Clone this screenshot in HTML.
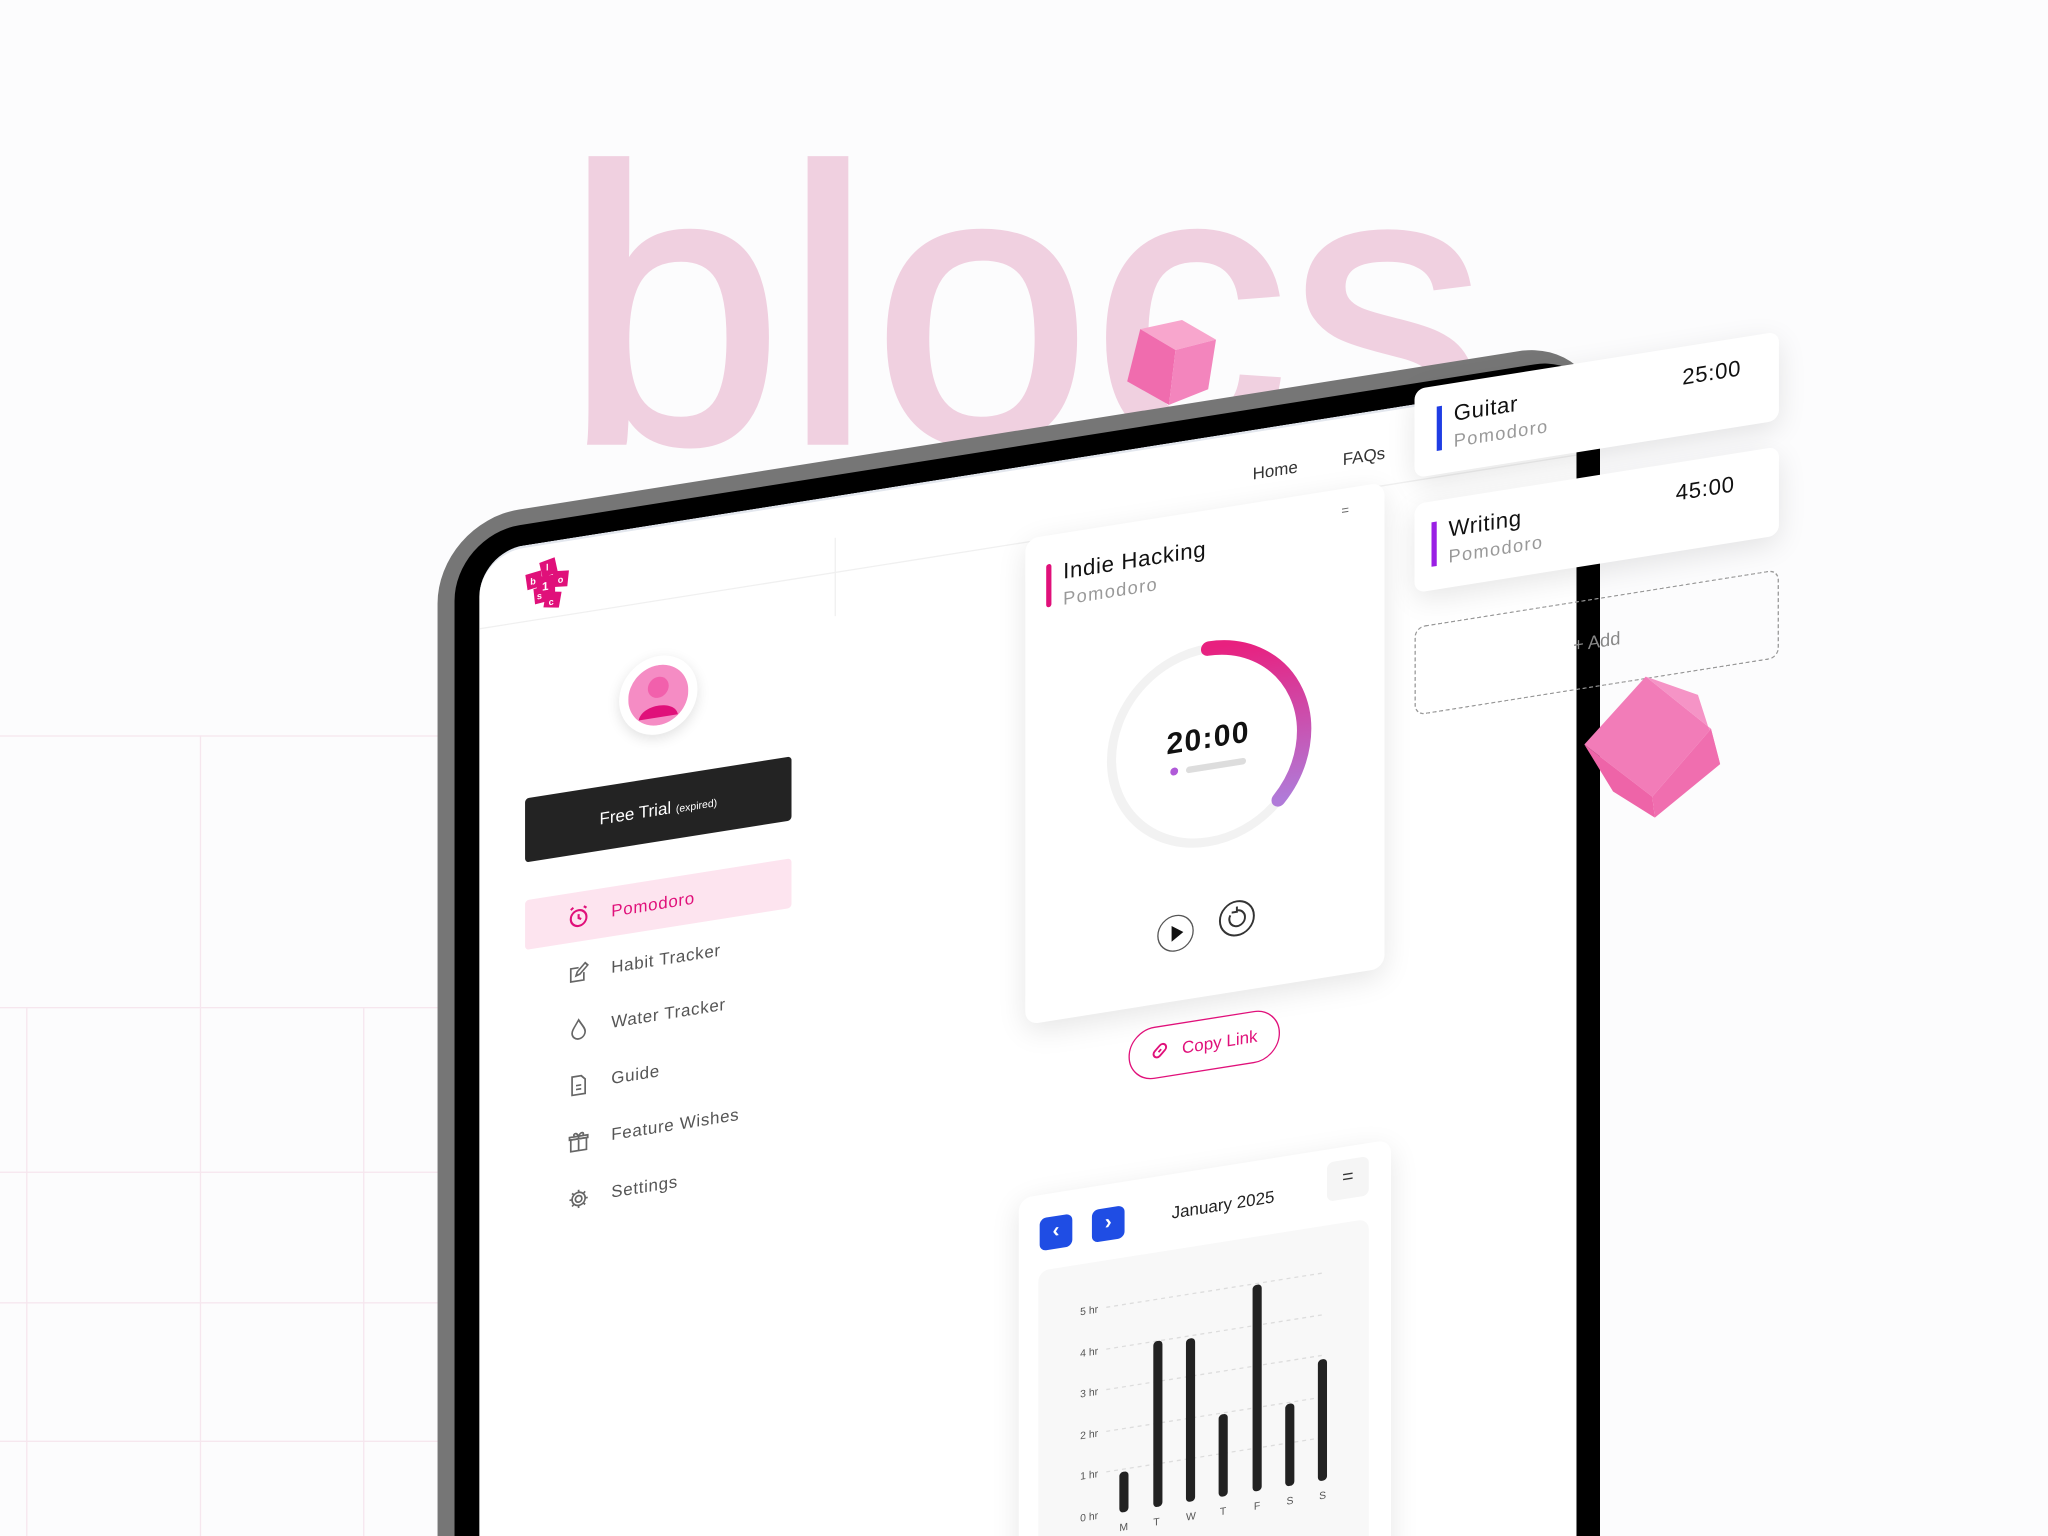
<!DOCTYPE html>
<html style="overflow:hidden;width:2048px;height:1536px"><head><meta charset="utf-8"><style>
*{margin:0;padding:0;box-sizing:border-box}
body{width:2048px;height:1536px;overflow:hidden;background:#fcfcfd;font-family:"Liberation Sans",sans-serif;position:relative}
#w{position:absolute;left:0;top:0;width:1568px;height:1176px;overflow:hidden;transform:scale(1.30612);transform-origin:0 0}
.ab{position:absolute}
.gl{position:absolute;background:#f6e6ee}
.sk{position:absolute;transform:skewY(-9deg);transform-origin:0 0}
.nav{position:absolute;left:100px;font-size:13px;color:#555;letter-spacing:.5px}
.card{position:absolute;background:#fff;border-radius:10px;box-shadow:0 6px 22px rgba(0,0,0,.10)}
</style></head><body><div id="w">
<div class="gl" style="left:0;top:563px;width:335px;height:1px"></div>
<div class="gl" style="left:0;top:771px;width:335px;height:1px"></div>
<div class="gl" style="left:0;top:897px;width:335px;height:1px"></div>
<div class="gl" style="left:0;top:997px;width:335px;height:1px"></div>
<div class="gl" style="left:0;top:1103px;width:335px;height:1px"></div>
<div class="gl" style="left:153px;top:563px;width:1px;height:613px"></div>
<div class="gl" style="left:20px;top:771px;width:1px;height:405px"></div>
<div class="gl" style="left:278px;top:771px;width:1px;height:405px"></div>
<div class="ab" style="left:433px;top:36px;font-size:298px;font-weight:normal;color:#f0d0e0;-webkit-text-stroke:5px #f0d0e0;letter-spacing:2px;line-height:400px">blocs</div>
<div class="sk" style="left:335px;top:400px;width:890px;height:920px">
 <div class="ab" style="left:0;top:0;width:890px;height:920px;background:#767676;border-radius:62px 62px 0 0"></div>
 <div class="ab" style="left:13px;top:12px;width:877px;height:908px;background:#000;border-radius:50px 50px 0 0"></div>
 <div class="ab" style="left:32px;top:28px;width:840px;height:892px;background:#fff;border-radius:34px 34px 0 0;border-top:2px solid #e3e7ee;overflow:hidden">
  <div class="ab" style="left:0;top:56px;width:840px;height:1px;background:#f0f0f0"></div>
  <div class="ab" style="left:272px;top:30px;width:1px;height:60px;background:#f0f0f0"></div>
 </div>
 <svg class="ab" style="left:66px;top:40px" width="38" height="40" viewBox="0 0 38 40">
  <rect x="2" y="10" width="12" height="12" fill="#e0107a" transform="rotate(-8 8 16)"/>
  <rect x="13" y="2" width="12" height="12" fill="#e0107a" transform="rotate(-12 19 8)"/>
  <rect x="22" y="12" width="12" height="12" fill="#e0107a" transform="rotate(6 28 18)"/>
  <rect x="10" y="14" width="14" height="14" fill="#e0107a"/>
  <rect x="8" y="22" width="12" height="12" fill="#e0107a" transform="rotate(-6 14 28)"/>
  <rect x="16" y="27" width="12" height="12" fill="#e0107a" transform="rotate(10 22 33)"/>
  <text x="5" y="19" font-size="7" fill="#fff" font-weight="bold">b</text><text x="17" y="10" font-size="7" fill="#fff" font-weight="bold">l</text><text x="26" y="21" font-size="7" fill="#fff" font-weight="bold">o</text><text x="10" y="31" font-size="7" fill="#fff" font-weight="bold">s</text><text x="19" y="37" font-size="7" fill="#fff" font-weight="bold">c</text><text x="14" y="25" font-size="9" fill="#fff" font-weight="bold">1</text>
 </svg>
 <div class="ab" style="left:139px;top:129px;width:60px;height:60px;border-radius:50%;background:#fff;box-shadow:0 3px 10px rgba(0,0,0,.12)"></div>
 <svg class="ab" style="left:146px;top:136px" width="46" height="46" viewBox="0 0 46 46"><circle cx="23" cy="23" r="23" fill="#f58cc4"/><circle cx="23" cy="17" r="8" fill="#f260ac"/><path d="M8 40 C10 28 36 28 38 40 Z" fill="#e0107a"/></svg>
 <div class="ab" style="left:67px;top:222px;width:204px;height:49px;background:#232323;border-radius:3px;color:#fff;font-size:13px;text-align:center;line-height:49px">Free Trial <span style="font-size:8px">(expired)</span></div>
 <div class="ab" style="left:67px;top:300px;width:204px;height:38px;background:#fde4ef;border-radius:3px"></div>
 <div class="nav" style="left:133px;top:311px;color:#e0107a">Pomodoro</div>
 <div class="nav" style="left:133px;top:354px">Habit Tracker</div>
 <div class="nav" style="left:133px;top:396px">Water Tracker</div>
 <div class="nav" style="left:133px;top:439px">Guide</div>
 <div class="nav" style="left:133px;top:482px">Feature Wishes</div>
 <div class="nav" style="left:133px;top:526px">Settings</div>
 <svg class="ab" style="left:99px;top:310px" width="18" height="18" viewBox="0 0 18 18" fill="none" stroke="#e0107a" stroke-width="1.6"><circle cx="9" cy="10" r="6"/><path d="M9 7v3l2 1M3 3l2-1.5M15 3l-2-1.5"/></svg>
 <svg class="ab" style="left:99px;top:353px" width="18" height="18" viewBox="0 0 18 18" fill="none" stroke="#666" stroke-width="1.3"><path d="M13 9v6H3V5h6"/><path d="M7 11l1-3 6-6 2 2-6 6z"/></svg>
 <svg class="ab" style="left:99px;top:396px" width="18" height="18" viewBox="0 0 18 18" fill="none" stroke="#666" stroke-width="1.3"><path d="M9 2C6 7 4 9 4 11.5a5 5 0 0 0 10 0C14 9 12 7 9 2z"/></svg>
 <svg class="ab" style="left:99px;top:439px" width="18" height="18" viewBox="0 0 18 18" fill="none" stroke="#666" stroke-width="1.3"><path d="M4 2h7l3 3v11H4z"/><path d="M7 9h4M7 12h4"/></svg>
 <svg class="ab" style="left:99px;top:482px" width="18" height="18" viewBox="0 0 18 18" fill="none" stroke="#666" stroke-width="1.3"><rect x="3" y="7" width="12" height="9"/><path d="M2 5h14v2H2zM9 5v11M9 5C7 1 4 3 6 5M9 5c2-4 5-2 3 0"/></svg>
 <svg class="ab" style="left:99px;top:526px" width="18" height="18" viewBox="0 0 18 18" fill="none" stroke="#666" stroke-width="1.3"><circle cx="9" cy="9" r="2.5"/><path d="M9 2v2M9 14v2M2 9h2M14 9h2M4 4l1.4 1.4M12.6 12.6L14 14M4 14l1.4-1.4M12.6 5.4L14 4"/><circle cx="9" cy="9" r="5"/></svg>
 <div class="ab" style="left:624px;top:54px;font-size:13px;color:#333">Home</div>
 <div class="ab" style="left:693px;top:54px;font-size:13px;color:#333">FAQs</div>
 <div class="card" style="left:450px;top:84px;width:275px;height:372px">
  <div class="ab" style="left:242px;top:12px;width:14px;height:10px;font-size:10px;color:#666">=</div>
  <div class="ab" style="left:16px;top:22px;width:4px;height:33px;background:#e0107a;border-radius:2px"></div>
  <div class="ab" style="left:29px;top:20px;font-size:17px;color:#111;letter-spacing:.5px">Indie Hacking</div>
  <div class="ab" style="left:29px;top:42px;font-size:14px;color:#999;letter-spacing:1px">Pomodoro</div>
  <svg class="ab" style="left:58px;top:98px" width="164" height="164" viewBox="0 0 164 164">
   <defs><linearGradient id="g" x1="0" y1="0" x2="0" y2="1"><stop offset="0" stop-color="#e8207f"/><stop offset="1" stop-color="#b07ad8"/></linearGradient></defs>
   <circle cx="82" cy="82" r="74" fill="none" stroke="#f2f2f2" stroke-width="7"/>
   <path d="M82 8 A74 74 0 0 1 136 132" fill="none" stroke="url(#g)" stroke-width="11" stroke-linecap="round"/>
   <text x="82" y="84" text-anchor="middle" font-size="23" font-family="Liberation Sans" fill="#111" font-weight="bold" letter-spacing="1">20:00</text>
   <rect x="65" y="96" width="46" height="5" rx="2.5" fill="#ddd"/><circle cx="56" cy="98" r="3" fill="#b05ad8"/>
  </svg>
  <div class="ab" style="left:101px;top:306px;width:28px;height:28px;border-radius:50%;border:1.5px solid #555;background:#fff"></div>
  <div class="ab" style="left:112px;top:314px;width:0;height:0;border-left:9px solid #111;border-top:6px solid transparent;border-bottom:6px solid transparent"></div>
  <svg class="ab" style="left:148px;top:302px" width="28" height="28" viewBox="0 0 28 28" fill="none" stroke="#333" stroke-width="1.5"><circle cx="14" cy="14" r="13"/><path d="M9 11a6 6 0 1 0 5-3M14 5v4h-4"/></svg>
 </div>
 <div class="ab" style="left:529px;top:473px;width:116px;height:40px;border:1.5px solid #e0107a;border-radius:20px;background:#fff;color:#e0107a;font-size:13px;line-height:37px;padding-left:40px">Copy Link</div>
 <svg class="ab" style="left:545px;top:484px" width="16" height="16" viewBox="0 0 16 16" fill="none" stroke="#e0107a" stroke-width="1.5"><path d="M7 9l2-2M6 6L4 8a2.5 2.5 0 0 0 4 4l2-2M10 10l2-2a2.5 2.5 0 0 0-4-4L6 6"/></svg>
 <div class="card" style="left:445px;top:588px;width:285px;height:320px">
  <div class="ab" style="left:16px;top:18px;width:25px;height:25px;background:#1f4de4;border-radius:5px;color:#fff;font-size:16px;text-align:center;line-height:24px;font-weight:bold">&lsaquo;</div>
  <div class="ab" style="left:56px;top:18px;width:25px;height:25px;background:#1f4de4;border-radius:5px;color:#fff;font-size:16px;text-align:center;line-height:24px;font-weight:bold">&rsaquo;</div>
  <div class="ab" style="left:117px;top:22px;font-size:13px;color:#222">January 2025</div>
  <div class="ab" style="left:236px;top:10px;width:32px;height:30px;background:#f5f5f5;border-radius:5px;font-size:15px;text-align:center;line-height:28px;color:#333">=</div>
  <div class="ab" style="left:15px;top:58px;width:253px;height:262px;background:#f8f8f8;border-radius:8px"></div>
 </div>
 <svg class="ab" style="left:480px;top:660px" width="240" height="200" viewBox="0 0 240 200" font-family="Liberation Sans" font-size="8" fill="#555">
  <g stroke="#ddd" stroke-dasharray="3 3"><line x1="32" y1="22" x2="200" y2="22"/><line x1="32" y1="54" x2="200" y2="54"/><line x1="32" y1="85" x2="200" y2="85"/><line x1="32" y1="117" x2="200" y2="117"/><line x1="32" y1="148" x2="200" y2="148"/></g>
  <text x="12" y="25">5 hr</text><text x="12" y="57">4 hr</text><text x="12" y="88">3 hr</text><text x="12" y="120">2 hr</text><text x="12" y="151">1 hr</text><text x="12" y="183">0 hr</text>
  <g fill="#222"><rect x="42" y="150" width="7" height="31" rx="3"/><rect x="68" y="54" width="7" height="127" rx="3"/><rect x="93" y="56" width="7" height="125" rx="3"/><rect x="118" y="118" width="7" height="63" rx="3"/><rect x="144" y="23" width="7" height="158" rx="3"/><rect x="169" y="118" width="7" height="63" rx="3"/><rect x="194" y="88" width="7" height="93" rx="3"/></g>
  <text x="42" y="195">M</text><text x="68" y="195">T</text><text x="93" y="195">W</text><text x="119" y="195">T</text><text x="145" y="195">F</text><text x="170" y="195">S</text><text x="195" y="195">S</text>
 </svg>
</div>
<div class="sk" style="left:1083px;top:298px;width:280px;height:260px">
 <div class="card" style="left:0;top:0;width:279px;height:68px;border-radius:8px">
  <div class="ab" style="left:17px;top:16px;width:4px;height:34px;background:#1f3de4"></div>
  <div class="ab" style="left:30px;top:14px;font-size:17px;color:#111;letter-spacing:.5px">Guitar</div>
  <div class="ab" style="left:30px;top:36px;font-size:14px;color:#999;letter-spacing:1px">Pomodoro</div>
  <div class="ab" style="left:205px;top:14px;font-size:17px;color:#111;letter-spacing:.5px">25:00</div>
 </div>
 <div class="card" style="left:0;top:88px;width:279px;height:68px;border-radius:8px">
  <div class="ab" style="left:13px;top:16px;width:4px;height:34px;background:#9a1fe4"></div>
  <div class="ab" style="left:26px;top:14px;font-size:17px;color:#111;letter-spacing:.5px">Writing</div>
  <div class="ab" style="left:26px;top:36px;font-size:14px;color:#999;letter-spacing:1px">Pomodoro</div>
  <div class="ab" style="left:200px;top:14px;font-size:17px;color:#111;letter-spacing:.5px">45:00</div>
 </div>
 <div class="ab" style="left:0;top:182px;width:279px;height:68px;border:1.5px dashed #999;border-radius:8px;text-align:center;line-height:64px;font-size:14px;color:#888">+ Add</div>
</div>
<svg class="ab" style="left:855px;top:240px" width="85" height="75" viewBox="0 0 85 75"><polygon points="18,12 50,5 76,20 45,28" fill="#f8a6cd"/><polygon points="18,12 45,28 40,70 8,52" fill="#f06cae"/><polygon points="45,28 76,20 70,58 40,70" fill="#f385bd"/></svg>
<svg class="ab" style="left:1205px;top:510px" width="120" height="125" viewBox="0 0 120 125"><polygon points="8,60 55,8 105,48 60,100" fill="#f27cb8"/><polygon points="55,8 95,22 112,75 105,48" fill="#f594c6"/><polygon points="8,60 60,100 62,116 30,96" fill="#ee64a8"/><polygon points="60,100 105,48 112,75 62,116" fill="#f06eaf"/></svg>
</div></body></html>
